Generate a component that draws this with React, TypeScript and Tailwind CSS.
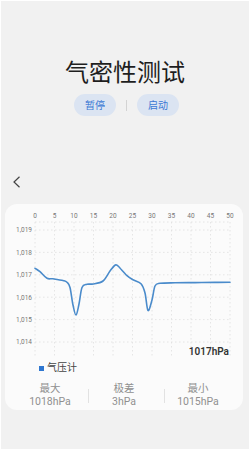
import React from "react";

// Airtightness test screen: title, pause/start pills, pressure chart card.
const FONT = "font-['Roboto','Noto_Sans_CJK_SC',sans-serif]";

const X_TICKS = [0, 5, 10, 15, 20, 25, 30, 35, 40, 45, 50];
const Y_TICKS = ["1,019", "1,018", "1,017", "1,016", "1,015", "1,014"];
const PLOT = { left: 30, right: 225, top: 18, bottom: 152 };
const X_STEP = (PLOT.right - PLOT.left) / 10;
const Y0 = 26;
const Y_STEP = 22.4;

// traced from the reference, card-local coords
const PTS: [number, number][] = [
  [30, 64.3], [35, 67.7], [42, 74.3], [48, 74.8], [58, 76.5], [62, 78.2],
  [65, 83.5], [68, 101], [71, 111], [74, 100], [77, 83.5], [82, 80.3],
  [88, 80], [98, 77], [105, 67], [110, 61.2], [113, 62], [122, 71.7],
  [128, 75.7], [136, 79.8], [140, 89], [143, 106.5], [147, 96], [150, 82],
  [155, 79.3], [170, 78.8], [190, 78.6], [210, 78.4], [225, 78.3],
];

function smooth(p: [number, number][]) {
  let d = `M${p[0][0]},${p[0][1]}`;
  for (let i = 0; i < p.length - 1; i++) {
    const a = p[i - 1] || p[i];
    const b = p[i];
    const c = p[i + 1];
    const e = p[i + 2] || c;
    const c1x = b[0] + (c[0] - a[0]) / 6;
    const c1y = b[1] + (c[1] - a[1]) / 6;
    const c2x = c[0] - (e[0] - b[0]) / 6;
    const c2y = c[1] - (e[1] - b[1]) / 6;
    d += ` C${c1x.toFixed(1)},${c1y.toFixed(1)} ${c2x.toFixed(1)},${c2y.toFixed(1)} ${c[0]},${c[1]}`;
  }
  return d;
}

function Chart() {
  return (
    <svg width="238" height="155" viewBox="0 0 238 155" className="block">
      {X_TICKS.map((t, i) => {
        const x = PLOT.left + i * X_STEP;
        return (
          <g key={t}>
            <text x={x} y={14} textAnchor="middle" fontSize="6.5" fill="#777">{t}</text>
            <line x1={x} y1={PLOT.top} x2={x} y2={PLOT.bottom} stroke="#e0e0e0" strokeWidth="0.8" strokeDasharray="1.5 2.5" />
          </g>
        );
      })}
      <line x1={PLOT.left} y1={PLOT.top} x2={PLOT.right} y2={PLOT.top} stroke="#e0e0e0" strokeWidth="0.8" strokeDasharray="1.5 2.5" />
      {Y_TICKS.map((t, i) => {
        const y = Y0 + i * Y_STEP;
        return (
          <g key={t}>
            <text x={27} y={y + 2.3} textAnchor="end" fontSize="6.5" fill="#777">{t}</text>
            <line x1={PLOT.left} y1={y} x2={PLOT.right} y2={y} stroke="#e0e0e0" strokeWidth="0.8" strokeDasharray="1.5 2.5" />
          </g>
        );
      })}
      <path d={smooth(PTS)} fill="none" stroke="#4a8bcb" strokeWidth="1.6" strokeLinejoin="round" strokeLinecap="round" />
      <text x={224} y={151} textAnchor="end" fontSize="10" fontWeight="600" fill="#333">1017hPa</text>
    </svg>
  );
}

function Stat({ label, value }: { label: string; value: string }) {
  return (
    <div className="flex flex-col items-center leading-[13px] text-[10.5px] text-[#909090]">
      <span>{label}</span>
      <span>{value}</span>
    </div>
  );
}

export default function App() {
  return (
    <div className={`w-[250px] h-[450px] bg-[#f1f1f1] border border-white flex flex-col ${FONT}`}>
      <h1 className="mt-[59px] text-center text-[24px] leading-[26px] text-[#1e1e1e] font-normal">
        气密性测试
      </h1>

      <div className="mt-[8px] flex items-center justify-center pl-[3px]">
        <button className="w-[42px] h-[22px] rounded-full bg-[#dbe4f2] text-[10px] text-[#3a78d4]">暂停</button>
        <span className="mx-[10px] w-px h-[11px] bg-[#d3d3d3]" />
        <button className="w-[42px] h-[22px] rounded-full bg-[#dbe4f2] text-[10px] text-[#3a78d4]">启动</button>
      </div>

      <div className="mt-[60px] ml-[11px] h-[12px]">
        <svg width="9" height="12" viewBox="0 0 9 12">
          <path d="M7.5 0.8 L2 6 L7.5 11.2" fill="none" stroke="#444" strokeWidth="1.2" />
        </svg>
      </div>

      <div className="mt-[16px] mx-[4px] w-[238px] h-[206px] rounded-[12px] bg-[#fbfbfb] flex flex-col">
        <Chart />
        <div className="mt-[3px] ml-[34px] flex items-center gap-[3px] text-[10px] leading-[12px] text-[#444]">
          <span className="w-[5px] h-[5px] bg-[#2f77d0]" />
          <span>气压计</span>
        </div>
        <div className="mt-[8px] mx-[8px] grid grid-cols-3 items-center relative">
          <Stat label="最大" value="1018hPa" />
          <Stat label="极差" value="3hPa" />
          <Stat label="最小" value="1015hPa" />
          <span className="absolute left-[75px] top-[7px] w-px h-[14px] bg-[#e2e2e2]" />
          <span className="absolute left-[151px] top-[7px] w-px h-[14px] bg-[#e2e2e2]" />
        </div>
      </div>
    </div>
  );
}
